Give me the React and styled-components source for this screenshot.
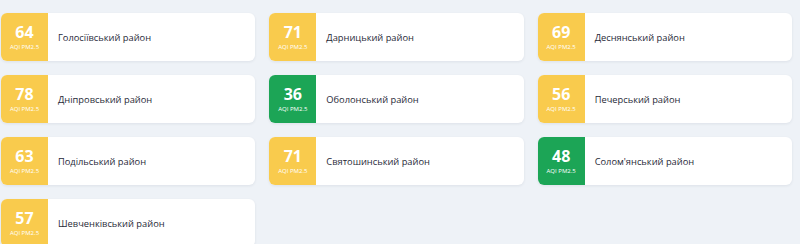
import React from "react";
import styled, { createGlobalStyle } from "styled-components";

const Global = createGlobalStyle`
  html, body { margin: 0; padding: 0; background: #eef2f7; }
  body { font-family: "Open Sans", "Noto Sans", sans-serif; }
`;

const Grid = styled.div`
  display: grid;
  grid-template-columns: repeat(3, 1fr);
  gap: 14px;
  padding: 13px 8px 0 1px;
`;

const Card = styled.div`
  display: flex;
  align-items: center;
  height: 48px;
  background: #ffffff;
  border-radius: 6px;
  overflow: hidden;
  box-shadow: 0 1px 3px rgba(30, 41, 59, 0.08);
`;

const Badge = styled.div`
  width: 47px;
  height: 100%;
  flex: none;
  display: flex;
  flex-direction: column;
  align-items: center;
  justify-content: center;
  background: ${(p) => (p.$good ? "#1ca556" : "#f9cb4d")};
  color: #ffffff;
`;

const Value = styled.div`
  font-size: 16px;
  font-weight: 700;
  line-height: 17px;
`;

const Label = styled.div`
  font-size: 6px;
  line-height: 8px;
  margin-top: 2px;
`;

const Name = styled.div`
  margin-left: 10px;
  font-size: 9.3px;
  color: #1f2937;
`;

const data = [
  [64, "Голосіївський район"],
  [71, "Дарницький район"],
  [69, "Деснянський район"],
  [78, "Дніпровський район"],
  [36, "Оболонський район"],
  [56, "Печерський район"],
  [63, "Подільський район"],
  [71, "Святошинський район"],
  [48, "Солом'янський район"],
  [57, "Шевченківський район"],
];

export default function App() {
  return (
    <>
      <Global />
      <Grid>
        {data.map(([v, n]) => (
          <Card key={n}>
            <Badge $good={v <= 50}>
              <Value>{v}</Value>
              <Label>AQI PM2.5</Label>
            </Badge>
            <Name>{n}</Name>
          </Card>
        ))}
      </Grid>
    </>
  );
}
